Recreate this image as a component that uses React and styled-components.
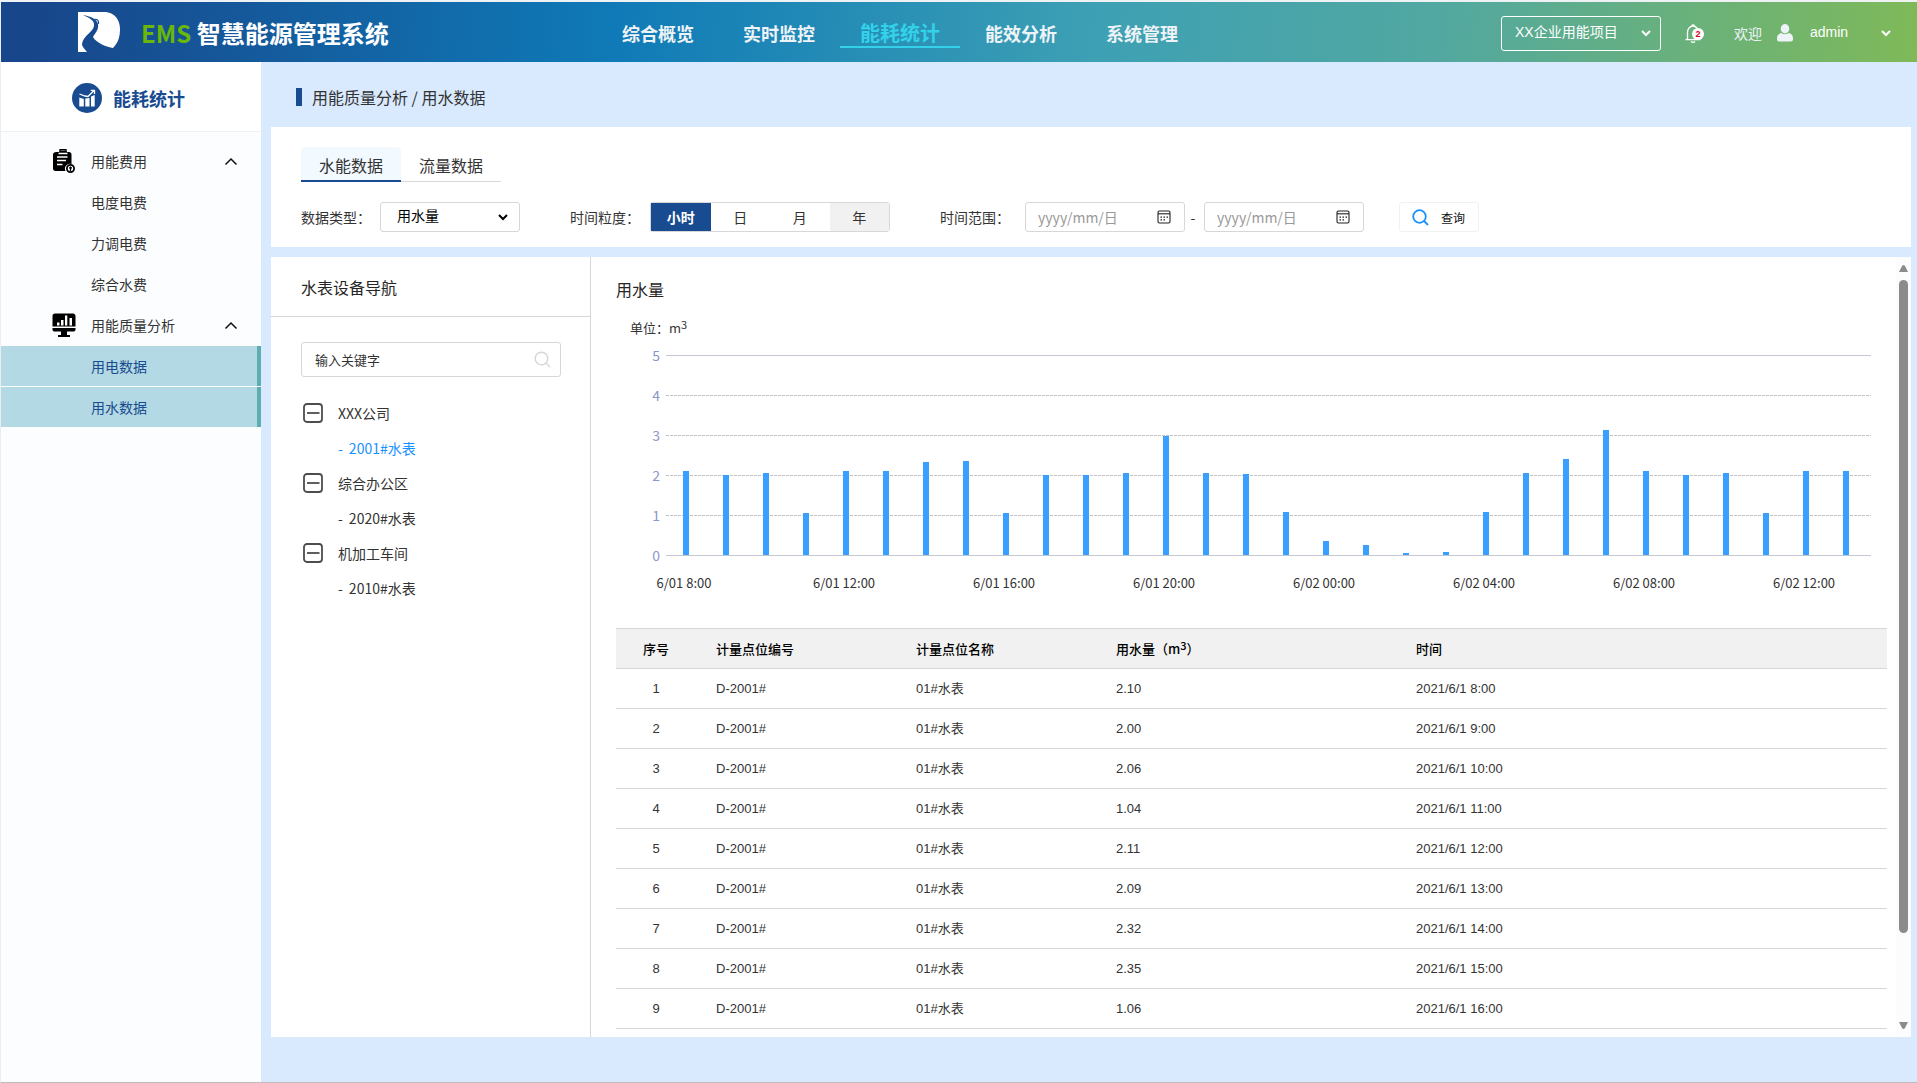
import React, { useState } from 'react';
import styled, { createGlobalStyle, css } from 'styled-components';

const cjk = '"Noto Sans CJK SC", sans-serif';
const latin = '"Liberation Sans", "Noto Sans CJK SC", sans-serif';
const blue = '#184b8f';
const line = '#d7d7d7';

const GlobalStyle = createGlobalStyle`
  *, *::before, *::after { box-sizing: border-box; }
  body { margin: 0; font: 14px/20px ${cjk}; color: #333; background: #d9eaff; }
  button, input, select { font: inherit; color: inherit; margin: 0; }
  button { cursor: pointer; }
  a { color: inherit; text-decoration: none; }
  h1, h2, p, ul { margin: 0; padding: 0; font-weight: inherit; font-size: inherit; }
  ul { list-style: none; }
  svg { display: block; flex: none; }
  sup { font-size: 11px; line-height: 0; vertical-align: 4px; }
`;

const Page = styled.div`
  display: flex;
  flex-direction: column;
  height: 100vh;
  border-top: 2px solid #eef2f5;
  border-left: 1px solid #ebedf0;
  border-bottom: 1px solid #bcbcbc;
`;

const Header = styled.header`
  display: flex;
  align-items: center;
  flex: none;
  height: 60px;
  padding-right: 25px;
  color: #fff;
  background: linear-gradient(95deg, #18468b 2%, #0f7ab7 32%, #3da0b4 57%, #52a8a1 75%, #7fb958 100%);
`;

const Brand = styled.a`
  display: flex;
  align-items: center;
  gap: 20px;
  width: 597px;
  padding-left: 77px;
`;

const BrandName = styled.h1`
  padding-top: 1px;
  font-size: 24px;
  line-height: 36px;
  font-weight: 700;
  white-space: nowrap;
`;

const BrandMark = styled.span`
  color: #6ab70b;
`;

const Nav = styled.nav`
  display: flex;
  gap: 1px;
`;

const NavLink = styled.a`
  width: 120px;
  height: 31px;
  line-height: 32px;
  text-align: center;
  font-size: 18px;
  font-weight: 700;
  color: #eef3f8;
  border-bottom: 2px solid transparent;
  ${(p) => p.$active && css`
    font-size: 20px;
    color: #33d2ea;
    border-color: #33d2ea;
  `}
`;

const UserArea = styled.div`
  display: flex;
  align-items: center;
  margin-left: auto;
  padding-top: 2px;
`;

const SelectWrap = styled.div`
  display: grid;
  grid-template-columns: 1fr auto;
  align-items: center;
  width: ${(p) => p.$width}px;

  select {
    grid-area: 1 / 1 / 2 / 3;
    width: 100%;
    height: ${(p) => p.$height}px;
    padding: ${(p) => p.$pad || '0 14px'};
    border: ${(p) => p.$border || 0};
    border-radius: 3px;
    background: transparent;
    appearance: none;
    font-family: ${latin};
    color: ${(p) => p.$color};
    outline: none;
  }
  select option { color: #333; }
  svg {
    grid-area: 1 / 2;
    margin-right: ${(p) => p.$inset}px;
    pointer-events: none;
  }
`;

const Bell = styled.button`
  position: relative;
  width: 20px;
  height: 20px;
  margin: 0 29px 0 24px;
  padding: 0;
  border: 0;
  background: none;
`;

const Badge = styled.span`
  position: absolute;
  left: 7px;
  top: 5px;
  width: 12px;
  height: 12px;
  border-radius: 50%;
  background: #fff;
  color: #d9001b;
  font: 700 9px/12px ${latin};
  text-align: center;
`;

const Welcome = styled.span`
  margin-right: 15px;
  color: #eef3f8;
`;

const UserIcon = styled.svg`
  margin-right: 17px;
`;

const Body = styled.div`
  display: flex;
  flex: 1;
  min-height: 0;
`;

const Sidebar = styled.aside`
  flex: none;
  width: 260px;
  background: #fcfdff;
`;

const SideTitle = styled.h2`
  display: flex;
  align-items: center;
  gap: 11px;
  height: 70px;
  padding: 2px 0 0 71px;
  margin-bottom: 9px;
  background: #fff;
  border-bottom: 1px solid #f0f0f0;
  color: ${blue};
  font-size: 18px;
  line-height: 24px;
  font-weight: 700;
`;

const Menu = styled.ul`
  display: flex;
  flex-direction: column;
  gap: 1px;
`;

const MenuHead = styled.button`
  display: grid;
  grid-template-columns: 24px 1fr auto;
  align-items: center;
  gap: 15px;
  width: 100%;
  height: 40px;
  padding: 0 23px 0 51px;
  border: 0;
  background: none;
  text-align: left;
`;

const MenuLink = styled.a`
  display: flex;
  align-items: center;
  height: 40px;
  padding-left: 90px;
  ${(p) => p.$active && css`
    color: ${blue};
    background: #b3d9e4;
    border-right: 4px solid #5eadb1;
  `}
`;

const Main = styled.main`
  display: flex;
  flex-direction: column;
  flex: 1;
  min-width: 0;
  padding: 0 6px 45px 10px;
  background: #d9eaff;
`;

const Crumb = styled.p`
  display: flex;
  align-items: center;
  gap: 10px;
  height: 65px;
  padding: 5px 0 0 25px;
  font-size: 16px;
  line-height: 24px;

  &::before {
    content: '';
    width: 6px;
    height: 18px;
    background: ${blue};
  }
`;

const FilterCard = styled.section`
  flex: none;
  height: 120px;
  margin-bottom: 10px;
  padding: 20px 30px 0;
  background: #fff;
`;

const Tabs = styled.div`
  display: flex;
  align-items: flex-end;
  margin-bottom: 20px;
`;

const Tab = styled.button`
  width: 100px;
  height: 35px;
  padding: 2px 0 0;
  border: 0;
  border-bottom: 1px solid ${line};
  background: none;
  font-size: 16px;
  line-height: 24px;
  ${(p) => p.$active && css`
    padding-top: 3px;
    border-bottom: 2px solid ${blue};
    border-radius: 4px 4px 0 0;
    background: #f2f9ff;
  `}
`;

const Filters = styled.form`
  display: flex;
  align-items: center;
  gap: 50px;
`;

const Field = styled.div`
  display: flex;
  align-items: center;
  gap: ${(p) => p.$gap || 9}px;
  white-space: nowrap;
`;

const Segments = styled.div`
  display: flex;
  border: 1px solid ${line};
  border-radius: 3px;
  width: 240px;
  height: 30px;
`;

const Segment = styled.button`
  flex: 1;
  padding: 0;
  border: 0;
  background: ${(p) => (p.$muted ? '#f1f1f1' : '#fff')};
  ${(p) => p.$active && css`
    background: ${blue};
    color: #fff;
    font-weight: 700;
  `}
`;

const Range = styled.div`
  display: flex;
  align-items: center;
`;

const RangeDash = styled.span`
  width: 19px;
  padding-right: 3px;
  text-align: center;
`;

const BoxedInput = styled.label`
  display: flex;
  align-items: center;
  width: ${(p) => p.$width};
  height: ${(p) => p.$height}px;
  padding: 0 ${(p) => p.$inset}px 0 ${(p) => p.$start}px;
  border: 1px solid ${line};
  border-radius: 3px;
  background: #fff;

  input {
    flex: 1;
    min-width: 0;
    padding: 0;
    border: 0;
    outline: none;
    background: none;
    font-size: ${(p) => p.$size}px;
    line-height: 20px;
  }
  input::placeholder { color: ${(p) => p.$hint}; opacity: 1; }
`;

const QueryButton = styled.button`
  display: flex;
  align-items: center;
  gap: 12px;
  width: 80px;
  height: 30px;
  margin-left: -15px;
  padding: 1px 0 0 12px;
  border: 1px solid #f1f1f1;
  border-radius: 3px;
  background: #fff;
  font-size: 12px;
  color: #111;
`;

const Workspace = styled.section`
  display: flex;
  flex: 1;
  min-height: 0;
  background: #fff;
`;

const Devices = styled.div`
  flex: none;
  width: 320px;
  border-right: 1px solid ${line};
`;

const PanelTitle = styled.h2`
  font-size: 16px;
  line-height: 24px;
  color: #262626;
`;

const DevicesHead = styled.div`
  display: flex;
  align-items: center;
  height: 60px;
  padding: 0 30px;
  border-bottom: 1px solid ${line};
`;

const DevicesBody = styled.div`
  display: flex;
  flex-direction: column;
  gap: 18px;
  padding: 25px 29px 0 30px;
`;

const TreeNode = styled.button`
  display: flex;
  align-items: center;
  gap: 15px;
  width: 100%;
  height: 35px;
  padding: 0 0 0 2px;
  border: 0;
  background: none;
`;

const TreeLeaf = styled.a`
  display: flex;
  align-items: center;
  gap: 6px;
  height: 35px;
  padding-left: 37px;
  color: ${(p) => (p.$active ? '#1890ff' : 'inherit')};
`;

const Report = styled.div`
  flex: 1;
  min-width: 0;
  padding: 20px 9px 0 25px;
  overflow: hidden;
`;

const Unit = styled.p`
  padding: 17px 0 0 14px;
  font-size: 13px;
  line-height: 20px;
`;

const Chart = styled.div`
  display: grid;
  grid-template-columns: 44px 1fr;
  column-gap: 6px;
  padding: 17px 16px 35px 0;
`;

const Scale = styled.div`
  display: flex;
  flex-direction: column;
  align-items: flex-end;
  margin: -20px 0 -19px;
  color: #8a98ca;
  span { height: 40px; line-height: 40px; }
`;

const Plot = styled.div`
  display: grid;
  height: 201px;
`;

const GridLines = styled.div`
  grid-area: 1 / 1;
  display: flex;
  flex-direction: column;
  justify-content: space-between;
`;

const GridLine = styled.i`
  height: 1px;
  background: ${(p) => (p.$solid ? '#c5c8d0' : 'repeating-linear-gradient(90deg, #c4c4c8 0 3px, transparent 3px 4px)')};
`;

const Bars = styled.div`
  grid-area: 1 / 1;
  display: flex;
  align-items: flex-end;
  padding: 0 5px 1px 0;
`;

const BarSlot = styled.div`
  flex: 1;
  display: flex;
  justify-content: center;
  align-items: flex-end;
  height: 100%;
`;

const Bar = styled.i`
  width: 6px;
  background: #3aa0ff;
`;

const Ticks = styled.div`
  grid-column: 2;
  display: flex;
  padding: 17px 5px 0 0;
  font-size: 13px;
  line-height: 20px;
`;

const Tick = styled.span`
  flex: 1;
  display: flex;
  justify-content: center;
  min-width: 0;
  padding-right: 4px;
  white-space: nowrap;
`;

const Table = styled.table`
  width: 100%;
  border-collapse: collapse;
  table-layout: fixed;
  font: 13px/20px ${latin};

  th, td {
    height: 40px;
    padding: 0 20px;
    border-bottom: 1px solid ${line};
    text-align: left;
  }
  th {
    border-top: 1px solid ${line};
    background: #f1f1f1;
    color: #000;
    font-family: ${cjk};
    font-weight: 500;
  }
  th:first-child, td:first-child { text-align: center; }
`;

const ScrollRail = styled.div`
  display: flex;
  flex-direction: column;
  align-items: center;
  flex: none;
  gap: 8px;
  width: 15px;
  padding: 8px 0;
  background: #fcfcfc;
`;

const ScrollTrack = styled.div`
  flex: 1;
  width: 9px;
`;

const ScrollThumb = styled.div`
  height: 89%;
  border-radius: 5px;
  background: #8b8b8b;
`;

const Chevron = ({ up, color = 'currentColor' }) =>
  up ? (
    <svg width="14" height="9" viewBox="0 0 14 9" fill="none" stroke={color} strokeWidth="1.500">
      <path d="M1.500 7.500 7 2l5.500 5.500" />
    </svg>
  ) : (
    <svg width="10" height="8" viewBox="0 0 10 8" fill="none" stroke={color} strokeWidth="2">
      <path d="M1 2l4 4 4-4" />
    </svg>
  );

const Logo = () => (
  <svg width="43" height="40" viewBox="0 0 43 40" fill="#fff">
    <path d="M0 0H28C37 1 42 8 42 17C42 25 40 31 35 36C29 35 18 31 15 25C17 21 21 18 20 12C19 7 12 4 5 3C12 6 17 9 16 14C15 20 5 24 4 32C4 35 7 37 9 40H0Z" />
    <path d="M16 7.500C19 7 21 8 20.500 12" fill="none" stroke="#1a5598" strokeWidth="1.200" />
  </svg>
);

const BellIcon = () => (
  <svg width="18" height="20" viewBox="0 0 18 20" fill="none" stroke="#fff" strokeWidth="1.300">
    <path d="M2.500 16.500V9.500C2.500 6 5 3 8 3s5.500 3 5.500 6.500v7" />
    <path d="M.5 16.700h15M6 18.500c1 1 3 1 4 0M6.800 2.800a1.400 1.400 0 0 1 2.600 0" />
  </svg>
);

const PersonIcon = () => (
  <UserIcon width="16" height="18" viewBox="0 0 16 18" fill="#eef3f8">
    <ellipse cx="8" cy="4.700" rx="4.300" ry="4.700" />
    <path d="M0 14c0-3 2-4.500 4.500-5 2 1.600 5 1.600 7 0 2.500.5 4.500 2 4.500 5v1.500c0 1.300-1 2-2.200 2H2.200C1 17.500 0 16.800 0 15.500z" />
  </UserIcon>
);

const StatsIcon = () => (
  <svg width="30" height="30" viewBox="0 0 30 30">
    <circle cx="15" cy="15" r="15" fill={blue} />
    <g fill="none" stroke="#fff" strokeWidth="1.300">
      <path d="M7.500 11l5.500 2 3 .5 6-6M18.800 7.300h3.700v3.700" />
    </g>
    <path d="M7.300 14.500l4.500 1.500v7.500H7.300zM13.300 15.500l4.200-.5v8.500h-4.200zM19 13.500l3.700-1.500v11.500H19z" fill="#fff" />
  </svg>
);

const ClipboardIcon = () => (
  <svg width="24" height="24" viewBox="0 0 24 24">
    <path d="M4 3h3l1-1.500h6L15 3h2c1.500 0 2.500 1 2.500 2.500v9.500a5 5 0 0 0-6 7H3.500C2 22 1 21 1 19.500v-14C1 4 2.500 3 4 3z" fill="#000" />
    <path d="M6.500 4.500h9M5 8h10.500M5 11.500h9M5 15.500h5.500" stroke="#fff" strokeWidth="1.400" fill="none" />
    <path d="M8 3V.7h6V3" stroke="#000" strokeWidth="1.300" fill="none" />
    <circle cx="18.500" cy="19.500" r="3.600" fill="#fff" stroke="#000" strokeWidth="1.800" />
    <path d="M18.500 17.500v4.500M17 18.800h3" stroke="#000" strokeWidth="1.300" />
  </svg>
);

const MonitorIcon = () => (
  <svg width="24" height="24" viewBox="0 0 24 24">
    <path d="M3 .5h18c1.500 0 2.500 1 2.500 2.500v10.500H.5V3C.5 1.500 1.500.5 3 .5zM.5 15h23v1.500c0 1.500-1 2-2.500 2H3c-1.500 0-2.500-.5-2.500-2zM9 18h6v4H9zM6 22h12v2H6z" fill="#000" />
    <path d="M5 9.500h2.500v3H5zM9 7h2.500v5.500H9zM13 2.500h2.300v10H13zM17.500 5h2.500v7.500h-2.500z" fill="#fff" />
  </svg>
);

const CalendarIcon = () => (
  <svg width="14" height="14" viewBox="0 0 14 14" fill="none" stroke="#222">
    <rect x="1" y="1" width="12" height="12" rx="1.500" strokeWidth="1.100" />
    <path d="M1 3.800h12" strokeWidth="1.100" />
    <path d="M3.500 7.200h8M3.500 9.900h5" strokeWidth="1.300" strokeDasharray="1.500 1.500" />
  </svg>
);

const SearchIcon = ({ color, width = 1.5 }) => (
  <svg width="17" height="17" viewBox="0 0 17 17" fill="none" stroke={color} strokeWidth={width}>
    <circle cx="7.500" cy="7.500" r="6.300" />
    <path d="M12 12l4 4" />
  </svg>
);

const CollapseIcon = () => (
  <svg width="20" height="20" viewBox="0 0 20 20" fill="none" stroke="#4d4d4d" strokeWidth="1.800">
    <rect x="1" y="1" width="18" height="18" rx="3" />
    <path d="M4 10h12.500" />
  </svg>
);

const Arrow = ({ down }) => (
  <svg width="9" height="7" viewBox="0 0 9 7" fill="#8b8b8b">
    <path d={down ? 'M0 0h9L6 6Q4.500 8 3 6z' : 'M0 7h9L6 1Q4.500-1 3 1z'} />
  </svg>
);

const navItems = ['综合概览', '实时监控', '能耗统计', '能效分析', '系统管理'];
const menu = [
  { title: '用能费用', icon: ClipboardIcon, items: ['电度电费', '力调电费', '综合水费'] },
  { title: '用能质量分析', icon: MonitorIcon, active: true, items: ['用电数据', '用水数据'] },
];
const devices = [
  ['XXX公司', '2001#水表'],
  ['综合办公区', '2020#水表'],
  ['机加工车间', '2010#水表'],
];
const maxValue = 5;
const readings = [
  2.1, 2, 2.05, 1.05, 2.1, 2.1, 2.325, 2.35, 1.05, 2, 2, 2.05, 2.975, 2.05, 2.025,
  1.075, 0.35, 0.25, 0.05, 0.075, 1.075, 2.05, 2.4, 3.125, 2.1, 2, 2.05, 1.05, 2.1, 2.1,
];
const ticks = {
  0: '6/01 8:00', 4: '6/01 12:00', 8: '6/01 16:00', 12: '6/01 20:00',
  16: '6/02 00:00', 20: '6/02 04:00', 24: '6/02 08:00', 28: '6/02 12:00',
};
const amounts = ['2.10', '2.00', '2.06', '1.04', '2.11', '2.09', '2.32', '2.35', '1.06'];

const DateBox = ({ label }) => (
  <BoxedInput $width="160px" $height={30} $start={12} $inset={13} $size={14} $hint="#999">
    <input type="text" placeholder="yyyy/mm/日" aria-label={label} />
    <CalendarIcon />
  </BoxedInput>
);

export default function App() {
  const [grain, setGrain] = useState('小时');
  const [tab, setTab] = useState('水能数据');

  return (
    <Page>
      <GlobalStyle />
      <Header>
        <Brand href="#">
          <Logo />
          <BrandName><BrandMark>EMS</BrandMark> 智慧能源管理系统</BrandName>
        </Brand>
        <Nav>
          {navItems.map((item) => (
            <NavLink href="#" key={item} $active={item === '能耗统计'}>{item}</NavLink>
          ))}
        </Nav>
        <UserArea>
          <SelectWrap $width={160} $height={35} $border="1px solid #fff" $pad="0 13px 3px" $color="#fff" $inset={10}>
            <select aria-label="项目"><option>XX企业用能项目</option></select>
            <Chevron />
          </SelectWrap>
          <Bell type="button" aria-label="消息">
            <BellIcon />
            <Badge>2</Badge>
          </Bell>
          <Welcome>欢迎</Welcome>
          <PersonIcon />
          <SelectWrap $width={82} $height={30} $pad="0 0 3px" $color="#fff" $inset={1}>
            <select aria-label="账户"><option>admin</option></select>
            <Chevron />
          </SelectWrap>
        </UserArea>
      </Header>

      <Body>
        <Sidebar>
          <SideTitle><StatsIcon />能耗统计</SideTitle>
          <Menu>
            {menu.map(({ title, icon: Icon, active, items }) => (
              <React.Fragment key={title}>
                <li>
                  <MenuHead type="button"><Icon />{title}<Chevron up color="#111" /></MenuHead>
                </li>
                {items.map((item) => (
                  <li key={item}><MenuLink href="#" $active={active}>{item}</MenuLink></li>
                ))}
              </React.Fragment>
            ))}
          </Menu>
        </Sidebar>

        <Main>
          <Crumb>用能质量分析 / 用水数据</Crumb>
          <FilterCard>
            <Tabs>
              {['水能数据', '流量数据'].map((name) => (
                <Tab key={name} type="button" $active={tab === name} onClick={() => setTab(name)}>{name}</Tab>
              ))}
            </Tabs>
            <Filters onSubmit={(e) => e.preventDefault()}>
              <Field>
                <label htmlFor="kind">数据类型：</label>
                <SelectWrap $width={140} $height={30} $border={`1px solid ${line}`} $pad="0 16px 2px" $color="#000" $inset={12}>
                  <select id="kind"><option>用水量</option></select>
                  <Chevron color="#000" />
                </SelectWrap>
              </Field>
              <Field $gap={10}>
                <span>时间粒度：</span>
                <Segments>
                  {['小时', '日', '月', '年'].map((name) => (
                    <Segment key={name} type="button" $active={grain === name} $muted={name === '年'} onClick={() => setGrain(name)}>
                      {name}
                    </Segment>
                  ))}
                </Segments>
              </Field>
              <Field $gap={15}>
                <span>时间范围：</span>
                <Range>
                  <DateBox label="开始日期" />
                  <RangeDash>-</RangeDash>
                  <DateBox label="结束日期" />
                </Range>
              </Field>
              <QueryButton type="submit"><SearchIcon color="#1890ff" width={1.8} />查询</QueryButton>
            </Filters>
          </FilterCard>

          <Workspace>
            <Devices>
              <DevicesHead><PanelTitle>水表设备导航</PanelTitle></DevicesHead>
              <DevicesBody>
                <BoxedInput $width="100%" $height={35} $start={13} $inset={9} $size={13} $hint="#333">
                  <input type="text" placeholder="输入关键字" aria-label="关键字" />
                  <SearchIcon color="#d7d7d7" />
                </BoxedInput>
                <ul>
                  {devices.map(([group, meter], i) => (
                    <li key={group}>
                      <TreeNode type="button"><CollapseIcon />{group}</TreeNode>
                      <TreeLeaf href="#" $active={i === 0}><span>-</span>{meter}</TreeLeaf>
                    </li>
                  ))}
                </ul>
              </DevicesBody>
            </Devices>

            <Report>
              <PanelTitle>用水量</PanelTitle>
              <Unit>单位：m<sup>3</sup></Unit>
              <Chart>
                <Scale>
                  {[5, 4, 3, 2, 1, 0].map((n) => <span key={n}>{n}</span>)}
                </Scale>
                <Plot>
                  <GridLines>
                    {[5, 4, 3, 2, 1, 0].map((n) => <GridLine key={n} $solid={n === 5 || n === 0} />)}
                  </GridLines>
                  <Bars>
                    {readings.map((value, i) => (
                      <BarSlot key={i}><Bar style={{ height: `${(value / maxValue) * 100}%` }} /></BarSlot>
                    ))}
                  </Bars>
                </Plot>
                <Ticks>
                  {readings.map((_, i) => <Tick key={i}>{ticks[i]}</Tick>)}
                </Ticks>
              </Chart>
              <Table>
                <colgroup>
                  <col style={{ width: 80 }} />
                  <col style={{ width: 200 }} />
                  <col style={{ width: 200 }} />
                  <col style={{ width: 300 }} />
                  <col />
                </colgroup>
                <thead>
                  <tr>
                    <th>序号</th>
                    <th>计量点位编号</th>
                    <th>计量点位名称</th>
                    <th>用水量（m<sup>3</sup>）</th>
                    <th>时间</th>
                  </tr>
                </thead>
                <tbody>
                  {amounts.map((amount, i) => (
                    <tr key={i}>
                      <td>{i + 1}</td>
                      <td>D-2001#</td>
                      <td>01#水表</td>
                      <td>{amount}</td>
                      <td>{`2021/6/1 ${i + 8}:00`}</td>
                    </tr>
                  ))}
                </tbody>
              </Table>
            </Report>
            <ScrollRail>
              <Arrow />
              <ScrollTrack><ScrollThumb /></ScrollTrack>
              <Arrow down />
            </ScrollRail>
          </Workspace>
        </Main>
      </Body>
    </Page>
  );
}
